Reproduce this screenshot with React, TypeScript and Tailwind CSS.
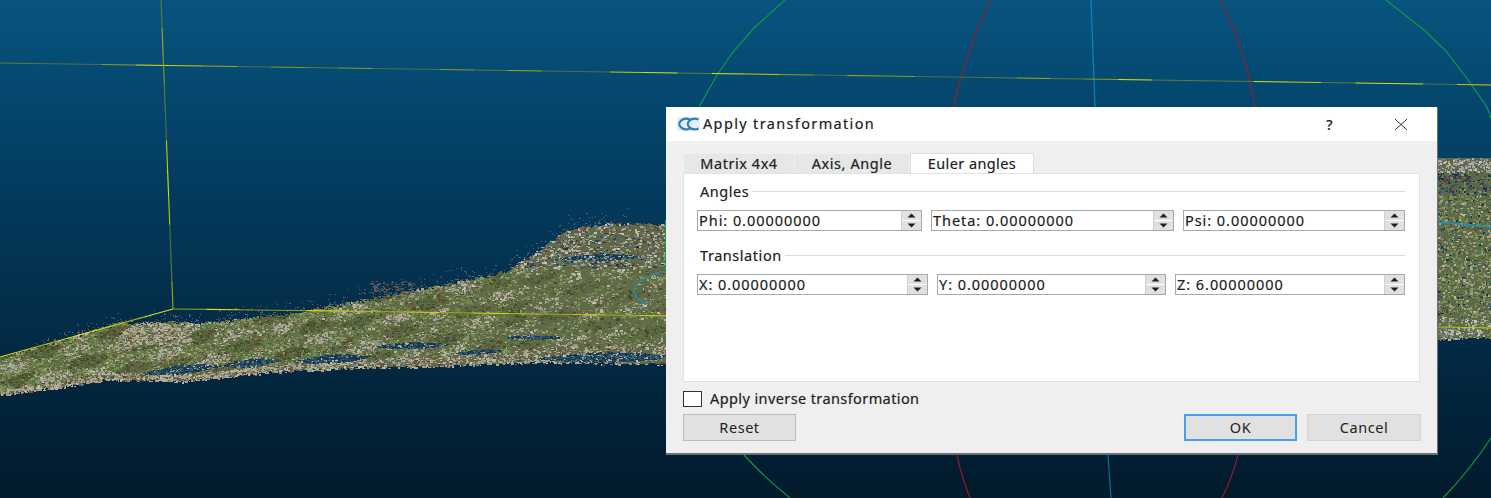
import { useMemo } from 'react';

type Pt = [number, number];

const leftTop: Pt[] = [[0, 357], [43, 345], [117, 322], [173, 321], [195, 323], [303, 311], [369, 298], [412, 290], [477, 277], [507, 270], [551, 240], [568, 228], [607, 222], [672, 223]];
const leftBottom: Pt[] = [[0, 395], [61, 388], [108, 380], [182, 382], [278, 372], [360, 368], [434, 367], [538, 363], [672, 365]];

// dark blue holes in the surface
const strips = [
  { x0: 143, x1: 221, y0: 373, y1: 365, h: 4 },
  { x0: 221, x1: 277, y0: 365, y1: 360, h: 4 },
  { x0: 295, x1: 369, y0: 361, y1: 356, h: 4 },
  { x0: 377, x1: 447, y0: 346, y1: 344, h: 3 },
  { x0: 456, x1: 500, y0: 353, y1: 350, h: 2 },
  { x0: 507, x1: 560, y0: 337, y1: 337, h: 2 },
  { x0: 538, x1: 672, y0: 358, y1: 356, h: 5 },
  { x0: 560, x1: 640, y0: 258, y1: 256, h: 3 },
];

const lerp = (pts: Pt[], x: number) => {
  for (let i = 1; i < pts.length; i++) {
    if (x <= pts[i][0]) {
      const t = (x - pts[i - 1][0]) / (pts[i][0] - pts[i - 1][0]);
      return pts[i - 1][1] + (pts[i][1] - pts[i - 1][1]) * t;
    }
  }
  return pts[pts.length - 1][1];
};

const makeRandom = (seed: number) => () => {
  seed = (seed + 0x6d2b79f5) | 0;
  let t = Math.imul(seed ^ (seed >>> 15), 1 | seed);
  t = (t + Math.imul(t ^ (t >>> 7), 61 | t)) ^ t;
  return ((t ^ (t >>> 14)) >>> 0) / 4294967296;
};

const patch = (x: number, y: number) =>
  Math.sin(x * 0.071 + y * 0.31) + Math.sin(x * 0.023 - y * 0.19 + 2) + Math.sin(x * 0.13 + y * 0.11 + 4);

const greens = ['#64793f', '#758a4e', '#53673a', '#879764', '#5f7345', '#6e8550'];
const darkGreens = ['#46582f', '#4f6036', '#3d4d2c', '#5a6a3c'];
const tans = ['#a8a088', '#b0a994', '#8e8670', '#9c9a80', '#bab4a0'];
const rocks = ['#b4b4ad', '#9ba5a8', '#6e7a80', '#8f8a80', '#c4c2ba'];
const browns = ['#6e5748', '#7b4f42', '#4f4038', '#5a4a3f'];
const waters = ['#16384f', '#123550', '#214a63', '#3d5f72'];

type Dot = { x: number; y: number; c: string; w: number; h: number };

const buildCloud = () => {
  const r = makeRandom(42);
  const pick = (a: string[]) => a[Math.floor(r() * a.length)];
  const dots: Dot[] = [];

  // left part of the cloud
  for (let i = 0; i < 17000; i++) {
    const x = r() * 672;
    const top = lerp(leftTop, x);
    const bot = lerp(leftBottom, x);
    const y = top + r() * (bot - top);
    const depth = (y - top) / (bot - top);
    const n = patch(x, y);
    const roll = r();
    const inMound = ((x - 153) / 39) ** 2 + ((y - 345) / 24) ** 2 < 1 && y < 345;
    let c: string;
    if (x > 505 && y < 268) {
      // bare rock at the top of the slope
      if (y < 232) c = roll < 0.55 ? pick(browns) : roll < 0.8 ? pick(rocks) : pick(tans);
      else c = roll < 0.45 ? pick(rocks) : roll < 0.65 ? pick(browns) : roll < 0.78 ? pick(waters) : pick(tans);
    } else if (inMound) {
      c = roll < 0.82 ? pick(tans) : roll < 0.94 ? pick(greens) : pick(browns);
    } else if (depth > 0.87) {
      c = roll < 0.7 ? pick(tans) : roll < 0.85 ? pick(rocks) : pick(browns);
    } else if (n > 1.1) {
      c = roll < 0.6 ? pick(tans) : roll < 0.78 ? pick(rocks) : pick(greens);
    } else if (n < -0.9) {
      c = roll < 0.7 ? pick(darkGreens) : roll < 0.88 ? pick(browns) : pick(greens);
    } else {
      c = roll < 0.76 ? pick(greens) : roll < 0.9 ? pick(tans) : pick(browns);
    }
    dots.push({ x, y, c, w: 1.2 + r() * 2, h: 1 + r() * 0.8 });
  }

  for (const st of strips) {
    const n = (st.x1 - st.x0) * st.h * 2;
    for (let i = 0; i < n; i++) {
      const t = r();
      const x = st.x0 + (st.x1 - st.x0) * t;
      const y = st.y0 + (st.y1 - st.y0) * t + (r() - 0.5) * st.h * 2 * Math.sin(t * Math.PI);
      dots.push({ x, y, c: r() < 0.85 ? pick(waters) : pick(rocks), w: 2.2, h: 1.4 });
    }
  }

  // stray points above the edge
  for (let i = 0; i < 420; i++) {
    const x = 30 + r() * 600;
    const y = lerp(leftTop, x) - r() * r() * 15;
    dots.push({ x, y, c: r() < 0.6 ? '#4d6679' : '#6f5c54', w: 1.2, h: 1 });
  }

  // dark brown clump sitting behind the crest
  for (let i = 0; i < 170; i++) {
    const x = 370 + r() * 44;
    const y = 281 + r() * 13;
    dots.push({ x, y, c: r() < 0.6 ? pick(browns) : '#3f5b70', w: 1.6, h: 1.1 });
  }

  // part to the right of the dialog
  for (let i = 0; i < 3000; i++) {
    const x = 1432 + r() * 60;
    const top = 158 + (r() - 0.5) * 3;
    const bot = 340 - (x - 1432) * 0.05;
    const y = top + r() * (bot - top);
    const roll = r();
    let c: string;
    if (y < 172) c = roll < 0.6 ? pick(rocks) : pick(tans);
    else if (y < 195) c = roll < 0.4 ? pick(waters) : roll < 0.7 ? pick(browns) : pick(greens);
    else if (y > 318) c = roll < 0.6 ? pick(rocks) : pick(greens);
    else c = roll < 0.62 ? pick(greens) : roll < 0.8 ? pick(tans) : roll < 0.9 ? pick(browns) : pick(waters);
    dots.push({ x, y, c, w: 1.2 + r() * 1.6, h: 1.2 + r() * 0.8 });
  }
  return dots;
};

// outline with a rough top edge so the cloud has no clean border
const buildOutline = () => {
  const r = makeRandom(7);
  const top: string[] = [];
  const bottom: string[] = [];
  for (let x = 0; x <= 672; x += 3) {
    top.push(`${x},${(lerp(leftTop, x) + 1 + r() * 3).toFixed(1)}`);
    bottom.unshift(`${x},${(lerp(leftBottom, x) - r() * 1.5).toFixed(1)}`);
  }
  return [...top, ...bottom].join(' ');
};

const dimShades = ['#c8c800', '#dede10', '#8d9a20', '#5f7a3c', '#4f7048', '#a0a818'];
const brightShades = ['#c8c800', '#dede10', '#b8bc10', '#a0a818', '#d4d408'];

const segments = (x0: number, y0: number, x1: number, y1: number, step: number, shades = dimShades) => {
  const r = makeRandom(Math.round(x0 + y0 + x1));
  const out: { a: Pt; b: Pt; c: string }[] = [];
  const n = Math.ceil(Math.hypot(x1 - x0, y1 - y0) / step);
  for (let i = 0; i < n; i++) {
    const t0 = i / n;
    const t1 = (i + 1) / n;
    out.push({
      a: [x0 + (x1 - x0) * t0, y0 + (y1 - y0) * t0],
      b: [x0 + (x1 - x0) * t1, y0 + (y1 - y0) * t1],
      c: shades[Math.floor(r() * shades.length)],
    });
  }
  return out;
};

const Scene = () => {
  const dots = useMemo(buildCloud, []);
  const outline = useMemo(buildOutline, []);
  const lines = useMemo(
    () => [
      ...segments(0, 63, 1491, 85, 34),
      ...segments(161, 0, 173, 309, 30),
      ...segments(173, 309, 340, 311, 34),
      ...segments(340, 311, 672, 316, 34, brightShades),
      ...segments(173, 309, 0, 357, 30, brightShades),
      ...segments(1438, 327, 1491, 328, 34, brightShades),
    ],
    [],
  );
  return (
    <svg viewBox="0 0 1491 498" className="absolute inset-0 h-[498px] w-[1491px]" shapeRendering="crispEdges">
      <defs>
        <filter id="soft" x="0" y="0" width="100%" height="100%">
          <feGaussianBlur stdDeviation="0.6" />
        </filter>
      </defs>
      <polygon points={outline} fill="#5f6a49" />
      <polygon points="1432,158 1491,158 1491,337 1432,340" fill="#5b6849" />
      <g filter="url(#soft)">
        {dots.map((d, i) => (
          <rect key={i} x={d.x} y={d.y} width={d.w} height={d.h} fill={d.c} />
        ))}
      </g>
      <g fill="none" shapeRendering="auto" strokeWidth="1.2">
        <path d="M785 0L754 28L733 52L717 75L699 107" stroke="#0f9a45" />
        <path d="M1386 0L1424 30L1445 50L1466 77L1487 107L1491 118" stroke="#0f9a45" />
        <path d="M990 0L976 33L963 70L953 107" stroke="#8a2036" />
        <path d="M1221 0L1238 40L1249 77L1255 107" stroke="#8a2036" />
        <path d="M1091 0L1095 107" stroke="#0b86bf" />
        <path d="M1108 455L1111 498" stroke="#0b6f9f" />
        <path d="M1238 455Q1232 478 1222 498" stroke="#8a1c2c" />
        <path d="M957 455Q962 478 970 498" stroke="#8a1c2c" />
        <path d="M744 455Q765 478 790 498" stroke="#0f9a45" />
        <path d="M1491 438Q1470 470 1443 498" stroke="#0f9a45" />
        <path d="M665.5 220V270" stroke="#0f9a45" />
        <path d="M663 271Q634 280 634 291Q636 300 646 304" stroke="#1a93b5" />
        <path d="M1438 222L1491 227" stroke="#1a93b5" strokeWidth="1.4" />
        {lines.map((l, i) => (
          <line key={i} x1={l.a[0]} y1={l.a[1]} x2={l.b[0]} y2={l.b[1]} stroke={l.c} strokeWidth="1.1" />
        ))}
      </g>
    </svg>
  );
};

const Arrow = ({ up }: { up: boolean }) => (
  <svg width="9" height="5" viewBox="0 0 9 5" className="block">
    <path d={up ? 'M4.5 0.5L8.5 4.5H0.5Z' : 'M0.5 0.5H8.5L4.5 4.5Z'} fill="#1f1f1f" />
  </svg>
);

const SpinBox = ({ label, width }: { label: string; width: string }) => (
  <div className={`flex h-[21px] border border-[#a9a9a9] bg-white ${width}`}>
    <span className="flex-1 overflow-hidden pl-[1px] leading-[18px] tracking-[0.95px] whitespace-nowrap">{label}</span>
    <div className="flex w-[20px] flex-col gap-[1px] border-l border-[#d0d0d0] bg-white">
      <div className="flex flex-1 items-center justify-center bg-[#e1e1e1]">
        <Arrow up />
      </div>
      <div className="flex flex-1 items-center justify-center bg-[#e1e1e1]">
        <Arrow up={false} />
      </div>
    </div>
  </div>
);

const GroupTitle = ({ title }: { title: string }) => (
  <div className="flex items-center gap-[3px] pl-[3px]">
    <span className="leading-[18px]">{title}</span>
    <div className="h-[1px] flex-1 bg-[#dcdcdc]" />
  </div>
);

const Dialog = () => (
  <div
    className="absolute top-[107px] left-[666px] flex h-[348px] w-[772px] flex-col border-r border-b-2 border-[#6d7072] bg-[#efefef] text-[14.5px] tracking-[0.55px] text-[#222222] [text-shadow:0_0_1px_rgba(0,0,0,0.3)]"
    style={{ fontFamily: '"Noto Sans", sans-serif' }}
  >
    <div className="flex h-[34px] items-center bg-white pl-[11px]">
      <svg width="23" height="16" viewBox="0 0 23 16" className="mr-[3px]">
        <rect x="0" y="1" width="23" height="14" rx="2" fill="#e6eff5" />
        <g fill="none" stroke="#2f7fb5" strokeWidth="2.2">
          <path d="M13 3.6A7 5.2 0 1 0 13 12.4" />
          <path d="M21.5 3.6A7 5.2 0 1 0 21.5 12.4" />
        </g>
      </svg>
      <span className="tracking-[1.35px]">Apply transformation</span>
      <span className="mr-[61px] ml-auto text-[14px] font-medium">?</span>
      <svg width="14" height="13" viewBox="0 0 14 13" className="mr-[29px]">
        <path d="M1 1L13 12M13 1L1 12" stroke="#333333" strokeWidth="1" fill="none" />
      </svg>
    </div>

    <div className="flex flex-1 flex-col pr-[16px] pl-[17px]">
      <div className="mt-[12px] flex h-[20px] items-end pl-[1px]">
        <div className="flex h-[19px] w-[110px] items-center justify-center bg-[#e7e7e7] leading-[19px]">Matrix 4x4</div>
        <div className="ml-[1px] flex h-[19px] w-[114px] items-center justify-center bg-[#e7e7e7] leading-[19px]">Axis, Angle</div>
        <div className="ml-[1px] flex h-[20px] w-[124px] items-center justify-center border-x border-t border-[#dedede] bg-white leading-[19px] tracking-[0.4px]">Euler angles</div>
      </div>

      <div className="mr-[1px] flex h-[209px] flex-col border border-[#e2e2e2] bg-white pt-[8px] pr-[14px] pl-[13px]">
        <GroupTitle title="Angles" />
        <div className="mt-[10px] flex gap-[9px]">
          <SpinBox label="Phi: 0.00000000" width="w-[225px]" />
          <SpinBox label="Theta: 0.00000000" width="w-[243px]" />
          <SpinBox label="Psi: 0.00000000" width="w-[222px]" />
        </div>
        <div className="mt-[15px]">
          <GroupTitle title="Translation" />
        </div>
        <div className="mt-[10px] flex gap-[9px]">
          <SpinBox label="X: 0.00000000" width="w-[231px]" />
          <SpinBox label="Y: 0.00000000" width="w-[229px]" />
          <SpinBox label="Z: 6.00000000" width="w-[230px]" />
        </div>
      </div>

      <label className="mt-[9px] flex h-[16px] items-center">
        <span className="h-[16px] w-[19px] border border-[#333333] bg-white" />
        <span className="ml-[8px] tracking-[0.4px]">Apply inverse transformation</span>
      </label>

      <div className="mt-[7px] flex items-start">
        <button className="h-[27px] w-[113px] border border-[#bcbcbc] bg-[#e1e1e1]">Reset</button>
        <button className="ml-auto h-[27px] w-[113px] border-2 border-[#4b9fe6] bg-[#e1e1e1]">OK</button>
        <button className="ml-[10px] h-[27px] w-[114px] border border-[#d4d4d4] bg-[#e1e1e1]">Cancel</button>
      </div>
    </div>
  </div>
);

const App = () => (
  <div className="relative h-[498px] w-[1491px] overflow-hidden bg-gradient-to-b from-[#07547f] via-[#033a5c] via-40% to-[#021a2c]">
    <Scene />
    <Dialog />
  </div>
);

export default App;
